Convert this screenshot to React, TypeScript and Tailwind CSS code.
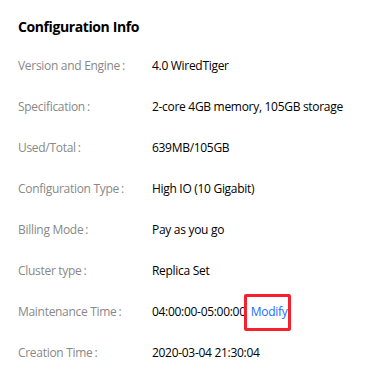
import React from 'react';

const rows: { label: string; value: string; modify?: boolean }[] = [
  { label: 'Version and Engine', value: '4.0 WiredTiger' },
  { label: 'Specification', value: '2-core 4GB memory, 105GB storage' },
  { label: 'Used/Total', value: '639MB/105GB' },
  { label: 'Configuration Type', value: 'High IO (10 Gigabit)' },
  { label: 'Billing Mode', value: 'Pay as you go' },
  { label: 'Cluster type', value: 'Replica Set' },
  { label: 'Maintenance Time', value: '04:00:00-05:00:00', modify: true },
  { label: 'Creation Time', value: '2020-03-04 21:30:04' },
];

const App: React.FC = () => {
  return (
    <div className="w-[374px] h-[374px] bg-white overflow-hidden font-['Open_Sans',sans-serif]">
      <div className="pl-[18px] pt-[17px]">
        <h2 className="text-[14px] leading-[20px] font-bold text-black tracking-[-0.4px]">Configuration Info</h2>
        <div className="mt-[8px]">
          {rows.map(row => (
            <div key={row.label} className="flex items-center h-[41px] text-[12px] tracking-[-0.3px]">
              <span className="w-[134px] text-[#888888]">
                {row.label}
                <span className="ml-[2px]">:</span>
              </span>
              <span className="text-black flex items-center">
                {row.value}
                {row.modify && (
                  <span className="relative pl-[5px] pr-[4px] text-[#1a6fff]">
                    Modify
                    <span className="absolute left-[-2px] right-[0px] top-[-9px] bottom-[-10px] border-[3px] border-[#f5222d] rounded-[2px]" />
                  </span>
                )}
              </span>
            </div>
          ))}
        </div>
      </div>
    </div>
  );
};

export default App;
